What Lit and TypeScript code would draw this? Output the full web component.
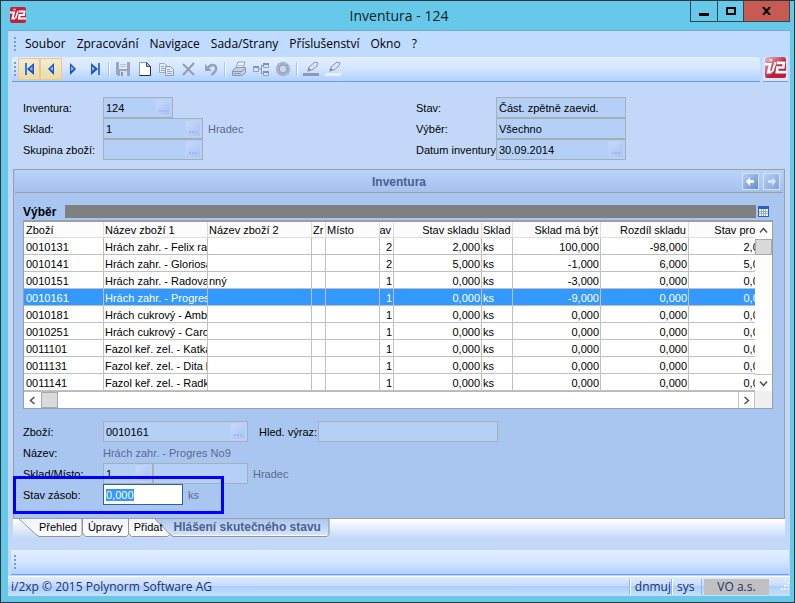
import { LitElement, html, css, svg, nothing } from "lit";
import { customElement, query } from "lit/decorators.js";
import { classMap } from "lit/directives/class-map.js";

interface Column {
  title: string;
  width: number;
  right?: boolean;
}

const COLUMNS: Column[] = [
  { title: "Zboží", width: 80 },
  { title: "Název zboží 1", width: 104 },
  { title: "Název zboží 2", width: 104 },
  { title: "Zr", width: 14 },
  { title: "Místo", width: 54 },
  { title: "Stav", width: 14, right: true },
  { title: "Stav skladu", width: 88, right: true },
  { title: "Sklad", width: 31 },
  { title: "Sklad má být", width: 88, right: true },
  { title: "Rozdíl skladu", width: 88, right: true },
  { title: "Stav prodej", width: 84, right: true },
];

const ROWS: string[][] = [
  ["0010131", "Hrách zahr. - Felix ran", "", "", "", "2", "2,000", "ks", "100,000", "-98,000", "2,000"],
  ["0010141", "Hrách zahr. - Gloriosa", "", "", "", "2", "5,000", "ks", "-1,000", "6,000", "5,000"],
  ["0010151", "Hrách zahr. - Radova", "nný", "", "", "1", "0,000", "ks", "-3,000", "0,000", "0,000"],
  ["0010161", "Hrách zahr. - Progres", "", "", "", "1", "0,000", "ks", "-9,000", "0,000", "0,000"],
  ["0010181", "Hrách cukrový - Ambr", "", "", "", "1", "0,000", "ks", "0,000", "0,000", "0,000"],
  ["0010251", "Hrách cukrový - Caro", "", "", "", "1", "0,000", "ks", "0,000", "0,000", "0,000"],
  ["0011101", "Fazol keř. zel. - Katka", "", "", "", "1", "0,000", "ks", "0,000", "0,000", "0,000"],
  ["0011131", "Fazol keř. zel. - Dita b", "", "", "", "1", "0,000", "ks", "0,000", "0,000", "0,000"],
  ["0011141", "Fazol keř. zel. - Radk", "", "", "", "1", "0,000", "ks", "0,000", "0,000", "0,000"],
];

const SELECTED = "0010161";

const MENU = ["Soubor", "Zpracování", "Navigace", "Sada/Strany", "Příslušenství", "Okno", "?"];

const ICONS = {
  first: svg`<path d="M4 2h2v12h-2z" fill="#3f74d8"/><path d="M13 2v12l-7-6z" fill="#1a50c4"/><path d="M11.500 5v5l-3-2z" fill="#8ab8ff"/>`,
  prev: svg`<path d="M11 2v12l-6-6z" fill="#1a50c4"/><path d="M10 5v5l-3-2z" fill="#8ab8ff"/>`,
  next: svg`<path d="M5 2v12l6-6z" fill="#1a50c4"/><path d="M6 5v5l3-2z" fill="#8ab8ff"/>`,
  last: svg`<path d="M11 2h2v12h-2z" fill="#3f74d8"/><path d="M4 2v12l7-6z" fill="#1a50c4"/><path d="M5 5v5l3-2z" fill="#8ab8ff"/>`,
  save: svg`<path d="M1 1h14v14H3l-2-2z" fill="#97a7c0"/><path d="M4 1h8v7H4z" fill="#dfe9f8"/><path d="M5 10h7v5H5z" fill="#d3def0"/><path d="M6 11h2v4H6z" fill="#8797b3"/><path d="M5 3.500h6M5 5.500h6" stroke="#b5c3d9"/>`,
  create: svg`<path d="M2.500 1.500h7l4 4v9h-11z" fill="#fff" stroke="#8d9cb8"/><path d="M13.500 5v9.500h-11" fill="none" stroke="#26324a"/><path d="M9.500 1.500v4h4z" fill="#c5d0e4" stroke="#3b4a68"/>`,
  copy: svg`<path d="M.5 2.500h5l3 3v6h-8z" fill="#e3ebf8" stroke="#9caac4"/><path d="M6.500 5.500h5l3 3v6h-8z" fill="#dfe8f7" stroke="#8c9bb8"/><path d="M2 5.500h3M2 7.500h4M2 9.500h4M8 8.500h3M8 10.500h5M8 12.500h5" stroke="#9caac4"/>`,
  remove: svg`<path d="M2 3l11 11M13 2L2 14" stroke="#8f9db6" stroke-width="2" fill="none"/>`,
  undo: svg`<path d="M5 7C7 3 12 3 13 6.500C14 10 11 12 8.500 14" stroke="#93a1bb" stroke-width="2.500" fill="none"/><path d="M2 3v7h7z" fill="#93a1bb"/>`,
  print: svg`<path d="M5 7l2-6h7l-2 6z" fill="#eef3fc" stroke="#93a1bb"/><path d="M1.500 9.500l3-3h10v5l-3 3h-10z" fill="#c3cee2" stroke="#8796b2"/><path d="M2 10.500h9l3-3M3 12.500h7" stroke="#8796b2" fill="none"/><path d="M7 4.500h5" stroke="#a9b6cd"/>`,
  tree: svg`<path d="M6 8h3M8.500 4v9M8.500 4.500h2M8.500 12.500h2" stroke="#8796b2" fill="none"/><path d="M.5 5.500h5v5h-5zM10.500 2.500h5v4h-5zM10.500 10.500h5v4h-5z" fill="#dae4f5" stroke="#93a1bb"/><path d="M0 6h6M10 3h6M10 11h6" stroke="#8292b0" stroke-width="2"/>`,
  gear: svg`<circle cx="8" cy="8" r="5" fill="none" stroke="#9dabc4" stroke-width="4"/><circle cx="8" cy="8" r="6.500" fill="none" stroke="#b3bfd4" stroke-width="2" stroke-dasharray="2 2"/><circle cx="8" cy="8" r="2.500" fill="#c9d6ec"/>`,
  penDark: svg`<path d="M0 12h16v3H0z" fill="#8c9ab5"/><path d="M5 9l1-3 6-5 3 1-1 3-5 4z" fill="#dbe4f4" stroke="#8494b2"/><path d="M4 11l2-4 2 2z" fill="#7888a8"/>`,
  penLight: svg`<path d="M0 12h16v3H0z" fill="#eaf1fd"/><path d="M5 9l1-3 6-5 3 1-1 3-5 4z" fill="#dbe4f4" stroke="#8494b2"/><path d="M4 11l2-4 2 2z" fill="#7888a8"/>`,
};

type IconName = keyof typeof ICONS;

interface Tool {
  icon: IconName;
  label: string;
  hot?: boolean;
}

const TOOLS: Tool[][] = [
  [
    { icon: "first", label: "První", hot: true },
    { icon: "prev", label: "Předchozí", hot: true },
    { icon: "next", label: "Další" },
    { icon: "last", label: "Poslední" },
  ],
  [
    { icon: "save", label: "Uložit" },
    { icon: "create", label: "Nový" },
    { icon: "copy", label: "Kopírovat" },
    { icon: "remove", label: "Smazat" },
    { icon: "undo", label: "Zpět" },
  ],
  [
    { icon: "print", label: "Tisk" },
    { icon: "tree", label: "Vazby" },
    { icon: "gear", label: "Nastavení" },
  ],
  [
    { icon: "penDark", label: "Zvýraznit" },
    { icon: "penLight", label: "Zrušit zvýraznění" },
  ],
];

const logo = (cls: string, tint: string, base: string) => html`
  <svg class=${cls} viewBox="0 0 16 16" aria-hidden="true">
    <defs>
      <linearGradient id=${`${cls}-fill`} x1="0" y1="0" x2="1" y2="1">
        <stop offset="0" stop-color=${tint} />
        <stop offset=".6" stop-color=${base} />
      </linearGradient>
    </defs>
    <rect width="16" height="16" rx="2" fill=${`url(#${cls}-fill)`} />
    <path d="M0 5.500h4L2.500 11.500h2.500" fill="none" stroke="#fff" stroke-width="2" />
    <path d="M3.500 2.500h2" stroke="#fff" stroke-width="1.500" />
    <path d="M5.500 11.500L8 4" stroke="#fff" stroke-width="1.500" />
    <path d="M9 4.500h5.500L14 8H9.500L9 11.500h7" fill="none" stroke="#fff" stroke-width="2" />
  </svg>
`;

@customElement("app-root")
export class AppRoot extends LitElement {
  @query("#stock") private stock!: HTMLInputElement;

  static styles = css`
    :host {
      display: block;
      font: 11px/13px "Liberation Sans", Arial, sans-serif;
      color: #000;
    }
    * {
      box-sizing: border-box;
    }
    button,
    input {
      font: inherit;
      color: inherit;
      margin: 0;
      padding: 0;
      border: 0;
      background: none;
      border-radius: 0;
    }
    svg {
      display: block;
    }
    .window {
      display: flex;
      flex-direction: column;
      min-height: 100vh;
      border: 1px solid #30383c;
      background: #66c9ea;
      padding: 0 4px 6px 7px;
    }

    /* title bar */
    .titlebar {
      display: grid;
      grid-template-columns: 1fr auto 1fr;
      height: 29px;
    }
    .app-logo {
      width: 16px;
      height: 16px;
      margin: 6px 0 0 2px;
    }
    .title {
      margin: 0;
      font: 14px/29px "Open Sans", "Noto Sans", sans-serif;
      color: #101c22;
    }
    .window-buttons {
      display: flex;
      justify-self: end;
      height: 21px;
      border: 1px solid #30474f;
      border-top: 0;
    }
    .window-buttons button {
      display: grid;
      place-items: center;
      width: 26px;
    }
    .window-buttons button + button {
      border-left: 1px solid #30474f;
    }
    .window-buttons .close {
      width: 46px;
      background: #c75b52;
    }

    .client {
      flex: 1;
      display: flex;
      flex-direction: column;
      border-top: 1px solid #7fa9c4;
      background: #c3d8f8;
    }

    /* menu and toolbars */
    .bars {
      background: #bfdbff;
    }
    .menu {
      display: flex;
      align-items: center;
      height: 26px;
      padding-left: 6px;
      font: 12px/16px "Open Sans", "Noto Sans", sans-serif;
    }
    .menu button {
      padding: 0 6px 0 5px;
      white-space: nowrap;
    }
    .grip {
      width: 2px;
      height: 14px;
      background: repeating-linear-gradient(#6f9fdf 0 2px, transparent 2px 4px);
    }
    .menu .grip {
      margin-right: 4px;
    }
    .toolrow {
      display: flex;
      gap: 3px;
      height: 25px;
      padding: 0 2px 0 4px;
    }
    .toolbar {
      flex: 1;
      display: flex;
      align-items: center;
      border-bottom: 1px solid #6f9ddb;
      border-radius: 3px 3px 0 0;
      background: linear-gradient(#e3efff, #d3e5ff 50%, #b0d1ff);
      padding-left: 2px;
    }
    .toolbar .grip {
      margin-right: 2px;
    }
    .tool {
      display: grid;
      place-items: center;
      width: 22px;
      height: 22px;
    }
    .tool.hot {
      background: linear-gradient(#f3ecd2, #e9dca5);
      border: 1px solid #f2c490;
    }
    .tool svg {
      width: 16px;
      height: 16px;
    }
    .divider {
      width: 2px;
      height: 15px;
      margin: 0 2px;
      background: linear-gradient(90deg, #9cc5ff 50%, #fff 50%);
    }
    .brand {
      width: 25px;
      padding: 0 2px;
      border-bottom: 1px solid #6f9ddb;
      background: #d9e5f5;
    }
    .brand-logo {
      width: 21px;
      height: 21px;
    }

    /* forms */
    .head {
      display: grid;
      grid-template-columns: 393px 1fr;
      padding: 15px 15px 9px;
    }
    .line {
      display: flex;
      align-items: center;
      height: 21px;
      white-space: nowrap;
    }
    .line > label,
    .line > .caption,
    .line > .note {
      padding-top: 2px;
    }
    .line > label,
    .line > .caption {
      width: 80px;
      flex: none;
    }
    .line > label.free {
      width: 59px;
      margin-left: 11px;
    }
    .note {
      color: #5b6b8f;
    }
    .after {
      margin-left: 5px;
    }
    .field {
      display: flex;
      align-items: center;
      height: 21px;
      padding: 1px;
      border: 1px solid #a6afb5;
      background: #b5d0f6;
    }
    .field input {
      flex: 1;
      min-width: 0;
      height: 17px;
      padding-left: 1px;
      outline: 0;
    }
    .w50 {
      width: 50px;
    }
    .w70 {
      width: 70px;
    }
    .w80 {
      width: 80px;
    }
    .w95 {
      width: 95px;
    }
    .w100 {
      width: 100px;
    }
    .w130 {
      width: 130px;
    }
    .w145 {
      width: 145px;
    }
    .w180 {
      width: 180px;
    }
    .lookup {
      display: flex;
      align-items: end;
      justify-content: center;
      gap: 1px;
      width: 16px;
      height: 17px;
      padding-bottom: 3px;
      border-radius: 2px;
      background: linear-gradient(135deg, #c8dafa, #a9c2f6);
      border: 1px solid #bfd1f8;
    }
    .lookup i {
      width: 2px;
      height: 2px;
      background: #9db8f0;
    }
    .field.edit {
      background: #fff;
      border-color: #2d6396;
    }
    .edit ::selection {
      background: #3399ff;
      color: #fff;
    }

    /* main panel */
    .panel {
      margin: 0 5px;
      border: 1px solid #9c9fa3;
      background: #a9c6f0;
    }
    .panel-head {
      display: grid;
      grid-template-columns: 1fr auto 1fr;
      align-items: center;
      height: 23px;
      margin: 0 1px;
      border-bottom: 1px solid #9c9fa3;
      background: linear-gradient(#bad4f9, #a4c1ed);
    }
    .panel-head h2 {
      grid-column: 2;
      margin: 0;
      padding-top: 2px;
      font-size: 12px;
      line-height: 14px;
      color: #4a6190;
    }
    .panel-nav {
      display: flex;
      gap: 4px;
      justify-self: end;
      padding-right: 3px;
    }
    .panel-nav button {
      display: grid;
      place-items: center;
      width: 17px;
      height: 17px;
      border: 1px solid #d6e4fa;
      background: linear-gradient(135deg, #b9d0f4, #5f8cd0);
    }
    .panel-nav button:last-child {
      background: linear-gradient(135deg, #b9d0f4, #7fa3dc);
    }
    .selection {
      display: flex;
      align-items: center;
      height: 13px;
      margin: 12px 15px 2px 9px;
    }
    .selection h3 {
      margin: 0;
      padding-top: 2px;
      width: 42px;
      font-size: 12px;
      line-height: 13px;
    }
    .selection .bar {
      flex: 1;
      height: 13px;
      background: #808080;
    }
    .selection button {
      margin-left: 2px;
    }

    /* grid */
    .grid {
      display: grid;
      grid-template-columns: 1fr 17px;
      margin: 0 11px 12px 9px;
      border: 1px solid #9aa0a8;
      border-top-width: 2px;
      background: #fff;
    }
    .clip {
      overflow: hidden;
    }
    table {
      table-layout: fixed;
      width: 749px;
      border-spacing: 0;
    }
    th,
    td {
      padding: 0;
      font-weight: normal;
    }
    .cell {
      display: flex;
      height: 17px;
      padding: 0 1px;
      line-height: 18px;
      border-right: 1px solid #c0c0c0;
      border-bottom: 1px solid #c0c0c0;
      overflow: hidden;
      white-space: nowrap;
    }
    th:first-child .cell,
    td:first-child .cell {
      padding-left: 2px;
    }
    .right .cell {
      justify-content: flex-end;
    }
    th .cell {
      height: 16px;
      line-height: 16px;
      border-color: #dedede;
      background: #fcfcfc;
    }
    th.right .cell {
      padding-right: 2px;
    }
    .selected td .cell {
      background: #3399ff;
      color: #fff;
    }
    .vscroll {
      display: flex;
      flex-direction: column;
    }
    .hscroll {
      display: flex;
      height: 17px;
      border-top: 1px solid #b9b9b9;
    }
    .vscroll button,
    .hscroll button {
      display: grid;
      place-items: center;
      width: 17px;
      height: 17px;
      border: 0 solid #c4c4c4;
    }
    .track {
      flex: 1;
    }
    .thumb {
      width: 17px;
      height: 16px;
      border: 1px solid #a8a8a8;
      background: #dadada;
    }
    .vscroll button:last-child {
      border-top-width: 1px;
    }
    .hscroll button {
      height: 16px;
    }
    .hscroll button:last-child {
      border-width: 0 1px;
    }
    .corner {
      background: #f0f0f0;
    }

    /* detail form */
    .detail {
      margin: 0 9px 13px;
    }
    .marked {
      position: relative;
    }
    .frame {
      position: absolute;
      left: -10px;
      top: -8px;
      width: 211px;
      height: 38px;
      border: 3px solid #0000fe;
      pointer-events: none;
    }

    /* page tabs */
    .tabs {
      position: relative;
      display: flex;
      gap: 11px;
      height: 20px;
      margin: 0 5px 11px;
      padding-left: 26px;
      background: linear-gradient(#fff, #c3d8f8);
    }
    .tab-shapes {
      position: absolute;
      left: 0;
      top: 0;
      width: 320px;
      height: 20px;
    }
    .tabs button {
      position: relative;
      height: 17px;
      white-space: nowrap;
    }
    .tabs .current {
      font-size: 12px;
      font-weight: bold;
      color: #4a6190;
    }

    .dock {
      display: flex;
      align-items: center;
      height: 25px;
      margin: 0 1px 0 3px;
      padding-left: 3px;
      border-bottom: 1px solid #6f9ddb;
      background: linear-gradient(#e3efff, #d3e5ff 50%, #b0d1ff);
    }

    /* status bar */
    .status {
      display: flex;
      align-items: center;
      height: 20px;
      margin-top: auto;
      padding-left: 3px;
      border-top: 1px solid #fff;
      background: linear-gradient(#dfebff, #c6dcfd 45%, #a9cdfd 46%, #c9dfff);
      font: 12px/16px "Open Sans", "Noto Sans", sans-serif;
      color: #1b2f6e;
      white-space: nowrap;
    }
    .status .copyright {
      flex: 1;
    }
    .status .item {
      min-width: 30px;
      padding: 0 0 0 5px;
      border-left: 1px solid #8db8f0;
      box-shadow: inset 1px 0 #fff;
    }
    .status .company {
      display: flex;
      padding-left: 2px;
      margin-right: 9px;
      border-left: 1px solid #8db8f0;
    }
    .status .company b {
      width: 65px;
      background: #c0c0c0;
      font-weight: normal;
      text-align: center;
    }
  `;

  firstUpdated() {
    this.stock.focus();
    this.stock.select();
  }

  private lookup(name: string) {
    return html`<button class="lookup" aria-label=${`Vybrat: ${name}`}><i></i><i></i><i></i></button>`;
  }

  private field(id: string, name: string, value: string, width: string, lookup = false) {
    return html`
      <div class="field ${width}">
        <input id=${id} aria-label=${name} .value=${value} readonly />
        ${lookup ? this.lookup(name) : nothing}
      </div>
    `;
  }

  private chevron(d: string) {
    return html`<svg width="9" height="9" viewBox="0 0 9 9"><path d=${d} fill="none" stroke="#505050" stroke-width="1.500" /></svg>`;
  }

  private renderTitle() {
    return html`
      <header class="titlebar">
        ${logo("app-logo", "#c8203c", "#c8203c")}
        <h1 class="title">Inventura - 124</h1>
        <div class="window-buttons">
          <button aria-label="Minimalizovat">
            <svg width="10" height="10"><path d="M0 7h10v3H0z" /></svg>
          </button>
          <button aria-label="Maximalizovat">
            <svg width="10" height="8"><path d="M1 1h8v6H1z" fill="none" stroke="#000" stroke-width="2" /></svg>
          </button>
          <button class="close" aria-label="Zavřít">
            <svg width="9" height="8"><path d="M1 0l7 8M8 0L1 8" stroke="#000" stroke-width="2" /></svg>
          </button>
        </div>
      </header>
    `;
  }

  private renderBars() {
    return html`
      <div class="bars">
        <nav class="menu">
          <span class="grip"></span>
          ${MENU.map((item) => html`<button>${item}</button>`)}
        </nav>
        <div class="toolrow">
          <div class="toolbar">
            <span class="grip"></span>
            ${TOOLS.map(
              (group, i) => html`
                ${i ? html`<span class="divider"></span>` : nothing}
                ${group.map(
                  (tool) => html`
                    <button class=${classMap({ tool: true, hot: !!tool.hot })} aria-label=${tool.label}>
                      <svg viewBox="0 0 16 16">${ICONS[tool.icon]}</svg>
                    </button>
                  `
                )}
              `
            )}
          </div>
          <div class="brand">${logo("brand-logo", "#e8c4ca", "#b8203a")}</div>
        </div>
      </div>
    `;
  }

  private renderHead() {
    return html`
      <section class="head">
        <div>
          <div class="line">
            <label for="inv">Inventura:</label>${this.field("inv", "Inventura", "124", "w70", true)}
          </div>
          <div class="line">
            <label for="store">Sklad:</label>${this.field("store", "Sklad", "1", "w100", true)}
            <span class="note after">Hradec</span>
          </div>
          <div class="line">
            <label for="group">Skupina zboží:</label>${this.field("group", "Skupina zboží", "", "w100", true)}
          </div>
        </div>
        <div>
          <div class="line">
            <label for="state">Stav:</label>${this.field("state", "Stav", "Část. zpětně zaevid.", "w130")}
          </div>
          <div class="line">
            <label for="choice">Výběr:</label>${this.field("choice", "Výběr", "Všechno", "w130")}
          </div>
          <div class="line">
            <label for="date">Datum inventury:</label>${this.field("date", "Datum inventury", "30.09.2014", "w130", true)}
          </div>
        </div>
      </section>
    `;
  }

  private renderGrid() {
    return html`
      <div class="grid">
        <div class="clip">
          <table>
            <colgroup>
              ${COLUMNS.map((c) => html`<col width=${c.width} />`)}
            </colgroup>
            <thead>
              <tr>
                ${COLUMNS.map(
                  (c) => html`<th class=${classMap({ right: !!c.right })}><div class="cell">${c.title}</div></th>`
                )}
              </tr>
            </thead>
            <tbody>
              ${ROWS.map(
                (row) => html`
                  <tr class=${classMap({ selected: row[0] === SELECTED })}>
                    ${row.map(
                      (v, i) =>
                        html`<td class=${classMap({ right: !!COLUMNS[i].right })}><div class="cell">${v}</div></td>`
                    )}
                  </tr>
                `
              )}
            </tbody>
          </table>
        </div>
        <div class="vscroll">
          <button aria-label="Nahoru">${this.chevron("M1 6.500l3.500-4 3.500 4")}</button>
          <div class="thumb"></div>
          <div class="track"></div>
          <button aria-label="Dolů">${this.chevron("M1 2.500l3.500 4 3.500-4")}</button>
        </div>
        <div class="hscroll">
          <button aria-label="Vlevo">${this.chevron("M6.500 1l-4 3.500 4 3.500")}</button>
          <div class="thumb"></div>
          <div class="track"></div>
          <button aria-label="Vpravo">${this.chevron("M2.500 1l4 3.500-4 3.500")}</button>
        </div>
        <div class="corner"></div>
      </div>
    `;
  }

  private renderDetail() {
    return html`
      <div class="detail">
        <div class="line">
          <label for="item">Zboží:</label>${this.field("item", "Zboží", "0010161", "w145", true)}
          <label class="free" for="search">Hled. výraz:</label>${this.field("search", "Hled. výraz", "", "w180")}
        </div>
        <div class="line">
          <span class="caption">Název:</span><span class="note">Hrách zahr. - Progres No9</span>
        </div>
        <div class="line">
          <label for="place">Sklad/Místo:</label>${this.field("place", "Sklad", "1", "w50", true)}
          ${this.field("spot", "Místo", "", "w95")}
          <span class="note after">Hradec</span>
        </div>
        <div class="line marked">
          <label for="stock">Stav zásob:</label>
          <div class="field edit w80"><input id="stock" .value=${"0,000"} /></div>
          <span class="note after">ks</span>
          <div class="frame"></div>
        </div>
      </div>
    `;
  }

  private renderTabs() {
    return html`
      <nav class="tabs">
        <svg class="tab-shapes" viewBox="0 0 320 20" aria-hidden="true">
          <defs>
            <linearGradient id="tab" x1="0" y1="0" x2="0" y2="1">
              <stop offset="0" stop-color="#eef3fc" />
              <stop offset="1" stop-color="#fff" />
            </linearGradient>
            <linearGradient id="tab-on" x1="0" y1="0" x2="0" y2="1">
              <stop offset="0" stop-color="#a9c6f0" />
              <stop offset="1" stop-color="#d9e6fa" />
            </linearGradient>
          </defs>
          <g fill="url(#tab)" stroke="#8f9499">
            <path d="M115.500-1v15l3 3.500h36l2-2V-1z" />
            <path d="M69.500-1v15l3 3.500h41l2-2V-1z" />
            <path d="M5-1l18 16.500 3 2h41l2-2V-1z" />
          </g>
          <path d="M141-1l16 16.500 3 2h154l2-2V-1z" fill="url(#tab-on)" stroke="#8f9499" />
          <path d="M160 16.500h154" stroke="#fff" />
        </svg>
        <button>Přehled</button>
        <button>Úpravy</button>
        <button>Přidat</button>
        <button class="current">Hlášení skutečného stavu</button>
      </nav>
    `;
  }

  render() {
    return html`
      <div class="window">
        ${this.renderTitle()}
        <main class="client">
          ${this.renderBars()} ${this.renderHead()}
          <section class="panel">
            <div class="panel-head">
              <h2>Inventura</h2>
              <div class="panel-nav">
                <button aria-label="Zpět">
                  <svg width="9" height="9"><path d="M0 4.500L4 0v3h4v3H4v3z" fill="#fff" /></svg>
                </button>
                <button aria-label="Vpřed">
                  <svg width="9" height="9"><path d="M9 4.500L5 0v3H1v3h4v3z" fill="#d6e4fa" /></svg>
                </button>
              </div>
            </div>
            <div class="selection">
              <h3>Výběr</h3>
              <div class="bar"></div>
              <button aria-label="Sloupce">
                <svg width="11" height="11">
                  <path d="M0 0h11v11H0z" fill="#2f5fae" />
                  <path d="M1 3h9v7H1z" fill="#fff" />
                  <path d="M1 5.500h9M1 7.500h9M3.500 3v7M5.500 3v7M7.500 3v7" stroke="#8fb2e6" />
                </svg>
              </button>
            </div>
            ${this.renderGrid()} ${this.renderDetail()}
          </section>
          ${this.renderTabs()}
          <div class="dock"><span class="grip"></span></div>
          <footer class="status">
            <span class="copyright">i/2xp © 2015 Polynorm Software AG</span>
            <span class="item">dnmuj</span>
            <span class="item">sys</span>
            <span class="company"><b>VO a.s.</b></span>
            <svg width="12" height="12" aria-hidden="true">
              <path d="M9 1h2v2H9zM6 4h2v2H6zM9 4h2v2H9zM3 7h2v2H3zM6 7h2v2H6zM9 7h2v2H9z" fill="#eaf3ff" />
            </svg>
          </footer>
        </main>
      </div>
    `;
  }
}
